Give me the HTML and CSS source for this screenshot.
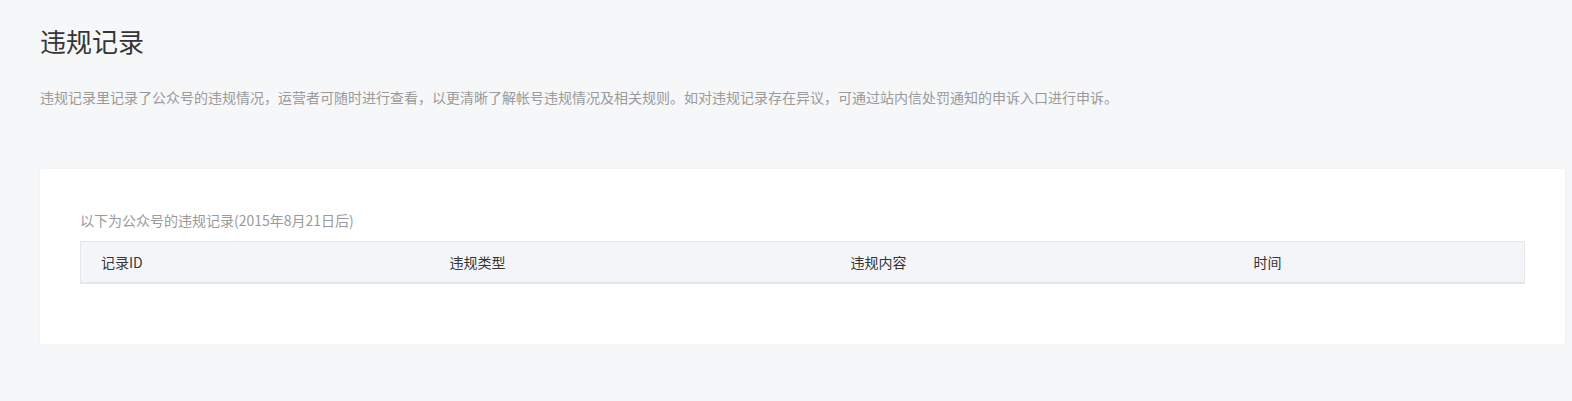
FILE: index.html
```html
<!DOCTYPE html>
<html lang="zh-CN">
<head>
    <meta charset="UTF-8">
    <meta name="viewport" content="width=device-width, initial-scale=1.0">
    <title>违规记录</title>
    <link rel="stylesheet" href="styles.css">
</head>
<body>
    <div class="page">
        <div class="page__header">
            <h2 class="page__title">违规记录</h2>
            <p class="page__desc">违规记录里记录了公众号的违规情况，运营者可随时进行查看，以更清晰了解帐号违规情况及相关规则。如对违规记录存在异议，可通过站内信处罚通知的申诉入口进行申诉。</p>
        </div>

        <div class="card">
            <p class="card__tips">以下为公众号的违规记录(2015年8月21日后)</p>
            <table class="record__table">
                <colgroup>
                    <col class="col--id">
                    <col class="col--type">
                    <col class="col--content">
                    <col class="col--time">
                </colgroup>
                <thead>
                    <tr>
                        <th>记录ID</th>
                        <th>违规类型</th>
                        <th>违规内容</th>
                        <th>时间</th>
                    </tr>
                </thead>
                <tbody></tbody>
            </table>
        </div>
    </div>
</body>
</html>
```

FILE: styles.css
```css
* {
    box-sizing: border-box;
    margin: 0;
    padding: 0;
}

body {
    font-family: "Noto Sans CJK SC", "Noto Sans", sans-serif;
    font-size: 14px;
    color: #353535;
    background: #f6f7f9;
}

/* PAGE
=============== */
.page {
    width: 1525px;
    margin-left: 40px;
}

.page__header {
    padding-top: 23px;
}

.page__title {
    font-size: 26px;
    font-weight: 400;
    line-height: 36px;
    color: #353535;
}

.page__desc {
    margin-top: 27px;
    line-height: 22px;
    color: #9a9a9a;
}

/* CARD */
.card {
    margin-top: 61px;
    padding: 40px 40px 60px;
    background: #fff;
    border-radius: 2px;
    box-shadow: 0 1px 4px rgba(0, 0, 0, 0.05);
}

.card__tips {
    line-height: 22px;
    margin-bottom: 10px;
    color: #9a9a9a;
}

/* TABLE */
.record__table {
    width: 100%;
    table-layout: fixed;
    border-collapse: collapse;
}

.col--id {
    width: 349px;
}

.col--type {
    width: 401px;
}

.col--content {
    width: 403px;
}

.record__table th {
    height: 41px;
    padding: 0 20px;
    text-align: left;
    font-weight: 400;
    background: #f4f5f9;
    border-top: 1px solid #e4e8eb;
    border-bottom: 2px solid #e4e6ea;
}

.record__table th:first-child {
    border-left: 1px solid #e4e8eb;
}

.record__table th:last-child {
    border-right: 1px solid #e4e8eb;
}
```
